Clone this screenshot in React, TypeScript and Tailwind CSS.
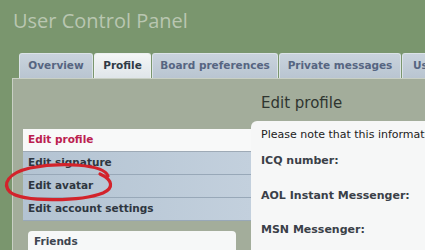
import React from "react";

const tabs = [
  { label: "Overview", w: "w-[74px]", active: false },
  { label: "Profile", w: "w-[57px]", active: true },
  { label: "Board preferences", w: "w-[126px]", active: false },
  { label: "Private messages", w: "w-[122px]", active: false },
  { label: "Usergroups", w: "w-[90px]", active: false },
];

const menu = ["Edit profile", "Edit signature", "Edit avatar", "Edit account settings"];

export default function App() {
  return (
    <div
      className="relative w-[425px] h-[250px] overflow-hidden bg-[#7a966e]"
      style={{ fontFamily: '"DejaVu Sans", Verdana, sans-serif' }}
    >
      {/* header */}
      <div className="h-[53px] pl-[13px] pt-[7px]">
        <h1
          className="text-[20px] leading-[28px] text-[#b9c6b1]"
          style={{ fontFamily: '"Open Sans", "DejaVu Sans", sans-serif' }}
        >
          User Control Panel
        </h1>
      </div>

      {/* tabs */}
      <div className="flex h-[25px] pl-[19px] gap-[1px] whitespace-nowrap">
        {tabs.map((t) => (
          <div
            key={t.label}
            className={`${t.w} shrink-0 flex items-center rounded-t-[3px] border-t border-x text-[10.5px] font-bold ${
              t.active
                ? "justify-center bg-gradient-to-b from-[#f4f6f6] to-[#dfe5e9] border-[#eef2f2] text-[#2f3a46]"
                : "justify-center bg-gradient-to-b from-[#c9d3dd] to-[#b9c5d1] border-[#dbe3e8] text-[#566581]"
            }`}
          >
            {t.label}
          </div>
        ))}
      </div>

      {/* panel */}
      <div className="ml-[12px] h-[172px] flex bg-[#a3ad9b] border-t border-l border-[#c9d0c4]">
        {/* left column */}
        <div className="w-[238px] shrink-0 pl-[10px] pt-[50px]">
          <ul className="text-[10.5px] font-bold">
            {menu.map((m, i) => (
              <li
                key={m}
                className={`h-[23px] flex items-center pl-[5px] ${
                  i === 0
                    ? "bg-[#f8f9f9] text-[#bb2150] border-b border-[#9eaab6]"
                    : "bg-gradient-to-r from-[#b3c3d2] to-[#c3d0dd] text-[#2e3640] border-b border-[#98a8b8]"
                }`}
              >
                {m}
              </li>
            ))}
          </ul>
          <div className="ml-[5px] mr-[15px] mt-[10px] h-[40px] rounded-[4px] bg-[#f6f8f8] pl-[6px] pt-[3px] text-[10.5px] font-bold text-[#3d4650]">
            Friends
          </div>
        </div>

        {/* right column */}
        <div className="flex-1 flex flex-col">
          <h2 className="h-[42px] pl-[10px] pt-[14px] text-[15px] leading-[20px] text-[#2f3530]">
            Edit profile
          </h2>
          <div className="flex-1 rounded-tl-[6px] bg-[#f6f7f7] pl-[10px] pt-[6px] text-[11px] text-[#222] whitespace-nowrap overflow-hidden">
            <p className="h-[26px] leading-[16px]">Please note that this information will be viewable</p>
            <p className="h-[35px] font-bold text-[#3a4048]">ICQ number:</p>
            <p className="h-[34px] font-bold text-[#3a4048]">AOL Instant Messenger:</p>
            <p className="font-bold text-[#3a4048]">MSN Messenger:</p>
          </div>
        </div>
      </div>

      {/* red marker around Edit avatar */}
      <svg className="absolute left-0 top-0 pointer-events-none" width="425" height="250">
        <path
          d="M108 176 C 104 164, 60 162, 30 168 C 8 173, 2 184, 10 192 C 22 202, 80 202, 103 193 C 114 188, 113 180, 100 174"
          fill="none"
          stroke="#d3232b"
          strokeWidth="3.2"
          strokeLinecap="round"
        />
      </svg>
    </div>
  );
}
